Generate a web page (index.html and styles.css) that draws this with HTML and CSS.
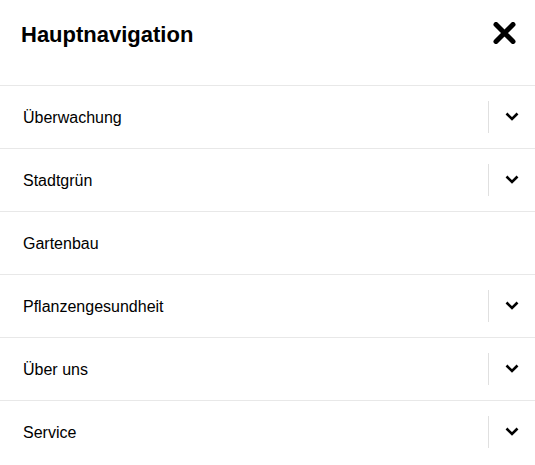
FILE: index.html
```html
<!DOCTYPE html>
<html lang="de">
<head>
<meta charset="utf-8">
<title>Hauptnavigation</title>
<link rel="stylesheet" href="styles.css">
</head>
<body>
<nav class="nav">
  <div class="nav-header">
    <h2 class="nav-title">Hauptnavigation</h2>
    <button class="close-btn" aria-label="Schließen">
      <svg width="23" height="22" viewBox="0 0 23 22"><path d="M3 2.5 L20 19.5 M20 2.5 L3 19.5" stroke="#000" stroke-width="5" stroke-linecap="round" fill="none"/></svg>
    </button>
  </div>
  <ul class="nav-list">
    <li class="nav-item"><a class="nav-link" href="#">Überwachung</a><button class="toggle" aria-label="Aufklappen"><svg width="14" height="9" viewBox="0 0 14 9"><path d="M1.5 1.5 L7 7 L12.5 1.5" stroke="#000" stroke-width="2.6" fill="none"/></svg></button></li>
    <li class="nav-item"><a class="nav-link" href="#">Stadtgrün</a><button class="toggle" aria-label="Aufklappen"><svg width="14" height="9" viewBox="0 0 14 9"><path d="M1.5 1.5 L7 7 L12.5 1.5" stroke="#000" stroke-width="2.6" fill="none"/></svg></button></li>
    <li class="nav-item"><a class="nav-link" href="#">Gartenbau</a></li>
    <li class="nav-item"><a class="nav-link" href="#">Pflanzengesundheit</a><button class="toggle" aria-label="Aufklappen"><svg width="14" height="9" viewBox="0 0 14 9"><path d="M1.5 1.5 L7 7 L12.5 1.5" stroke="#000" stroke-width="2.6" fill="none"/></svg></button></li>
    <li class="nav-item"><a class="nav-link" href="#">Über uns</a><button class="toggle" aria-label="Aufklappen"><svg width="14" height="9" viewBox="0 0 14 9"><path d="M1.5 1.5 L7 7 L12.5 1.5" stroke="#000" stroke-width="2.6" fill="none"/></svg></button></li>
    <li class="nav-item"><a class="nav-link" href="#">Service</a><button class="toggle" aria-label="Aufklappen"><svg width="14" height="9" viewBox="0 0 14 9"><path d="M1.5 1.5 L7 7 L12.5 1.5" stroke="#000" stroke-width="2.6" fill="none"/></svg></button></li>
  </ul>
</nav>
</body>
</html>
```

FILE: styles.css
```css
html, body {
  margin: 0;
  padding: 0;
  background: #fff;
}
body {
  font-family: "Liberation Sans", Arial, sans-serif;
  color: #000;
}
.nav-header {
  height: 85px;
  display: flex;
  align-items: flex-start;
  justify-content: space-between;
  padding: 22px 19px 0 21px;
  box-sizing: border-box;
}
.nav-title {
  margin: 2px 0 0;
  font-size: 22px;
  font-weight: bold;
  line-height: 1;
}
.close-btn {
  background: none;
  border: 0;
  padding: 0;
  display: flex;
  cursor: pointer;
}
.nav-list {
  list-style: none;
  margin: 0;
  padding: 0;
}
.nav-item {
  display: flex;
  align-items: center;
  height: 63px;
  border-top: 1px solid #e8e8e8;
  box-sizing: border-box;
}
.nav-link {
  flex: 1;
  padding: 2px 0 0 23px;
  font-size: 16px;
  color: #000;
  text-decoration: none;
}
.toggle {
  width: 47px;
  height: 32px;
  background: none;
  border: 0;
  border-left: 1px solid #e0e0e0;
  padding: 0 0 2px;
  display: flex;
  align-items: center;
  justify-content: center;
  cursor: pointer;
}
```
